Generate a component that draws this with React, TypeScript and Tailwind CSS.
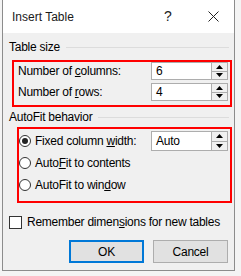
import React from 'react';

const font = { fontFamily: '"Liberation Sans", Arial, sans-serif' };

const Spin = ({ value, h }: { value: string; h: string }) => (
  <div className={`flex w-[77px] ${h} border border-[#adadad] bg-white`}>
    <div className="flex flex-1 items-center pl-[4px] text-[12px] text-black">{value}</div>
    <div className="flex w-[16px] flex-col border-l border-[#adadad]">
      <div className="flex flex-1 items-center justify-center border-b border-[#adadad] bg-[#f0f0f0]">
        <svg width="7" height="4" viewBox="0 0 7 4">
          <path d="M0 4 L3.5 0 L7 4 Z" fill="#000" />
        </svg>
      </div>
      <div className="flex flex-1 items-center justify-center bg-[#f0f0f0]">
        <svg width="7" height="4" viewBox="0 0 7 4">
          <path d="M0 0 L3.5 4 L7 0 Z" fill="#000" />
        </svg>
      </div>
    </div>
  </div>
);

const GroupHeader = ({ label, className }: { label: string; className: string }) => (
  <div className={`flex h-[16px] items-center pl-[6px] pr-[5px] ${className}`}>
    <span className="whitespace-nowrap text-[12px] text-black">{label}</span>
    <div className="ml-[6px] h-px flex-1 bg-[#dcdcdc]" />
  </div>
);

const Radio = ({ checked }: { checked?: boolean }) => (
  <div className="flex h-[12px] w-[12px] shrink-0 items-center justify-center rounded-full border border-[#333] bg-white">
    {checked && <div className="h-[6px] w-[6px] rounded-full bg-[#222]" />}
  </div>
);

const App = () => {
  return (
    <div className="h-[276px] w-[241px] bg-[#f4f4f4] tracking-[-0.25px]" style={font}>
      <div className="ml-[2px] flex h-[271px] w-[233px] flex-col border-x border-b border-[#8c8c8c] bg-[#f0f0f0]">
        <div className="flex h-[33px] items-center bg-white pl-[9px]">
          <span className="w-[152px] text-[12px] tracking-normal text-[#1a1a1a]">Insert Table</span>
          <span className="text-[14px] text-[#222]">?</span>
          <svg className="ml-[36px]" width="11" height="11" viewBox="0 0 11 11">
            <path d="M0.5 0.5 L10.5 10.5 M10.5 0.5 L0.5 10.5" stroke="#222" strokeWidth="1" />
          </svg>
        </div>

        <GroupHeader label="Table size" className="mt-[6px]" />

        <div className="ml-[9px] mt-[5px] flex w-[220px] flex-col gap-[3px] border-2 border-[#ff0000] pb-[4px] pl-[4px] pr-[2px]">
          <div className="flex items-center justify-between">
            <span className="whitespace-nowrap text-[12px] text-black">
              Number of <u>c</u>olumns:
            </span>
            <Spin value="6" h="h-[18px]" />
          </div>
          <div className="flex items-center justify-between">
            <span className="whitespace-nowrap text-[12px] text-black">
              Number of <u>r</u>ows:
            </span>
            <Spin value="4" h="h-[18px]" />
          </div>
        </div>

        <GroupHeader label="AutoFit behavior" className="mt-[2px]" />

        <div className="ml-[14px] mt-[2px] flex w-[215px] flex-col border-2 border-[#ff0000] pb-[6px] pr-[2px] pt-[2px]">
          <div className="flex h-[20px] items-center">
            <Radio checked />
            <span className="ml-[4px] whitespace-nowrap text-[12px] text-black">
              Fixed column <u>w</u>idth:
            </span>
            <div className="ml-auto">
              <Spin value="Auto" h="h-[20px]" />
            </div>
          </div>
          <div className="mt-[2px] flex h-[20px] items-center">
            <Radio />
            <span className="ml-[4px] whitespace-nowrap text-[12px] text-black">
              Auto<u>F</u>it to contents
            </span>
          </div>
          <div className="mt-[2px] flex h-[20px] items-center">
            <Radio />
            <span className="ml-[4px] whitespace-nowrap text-[12px] text-black">
              AutoFit to win<u>d</u>ow
            </span>
          </div>
        </div>

        <div className="ml-[6px] mt-[11px] flex h-[16px] items-center">
          <div className="h-[13px] w-[13px] shrink-0 border border-[#333] bg-white" />
          <span className="ml-[5px] whitespace-nowrap text-[12px] text-black">
            Remember dimen<u>s</u>ions for new tables
          </span>
        </div>

        <div className="mt-[10px] flex justify-end gap-[9px] pr-[6px]">
          <button className="flex h-[23px] w-[75px] items-center justify-center border-2 border-[#0078d7] bg-[#e1e1e1] text-[12px] text-black">
            OK
          </button>
          <button className="flex h-[23px] w-[75px] items-center justify-center border border-[#adadad] bg-[#e1e1e1] text-[12px] text-black">
            Cancel
          </button>
        </div>
      </div>
    </div>
  );
};

export default App;
